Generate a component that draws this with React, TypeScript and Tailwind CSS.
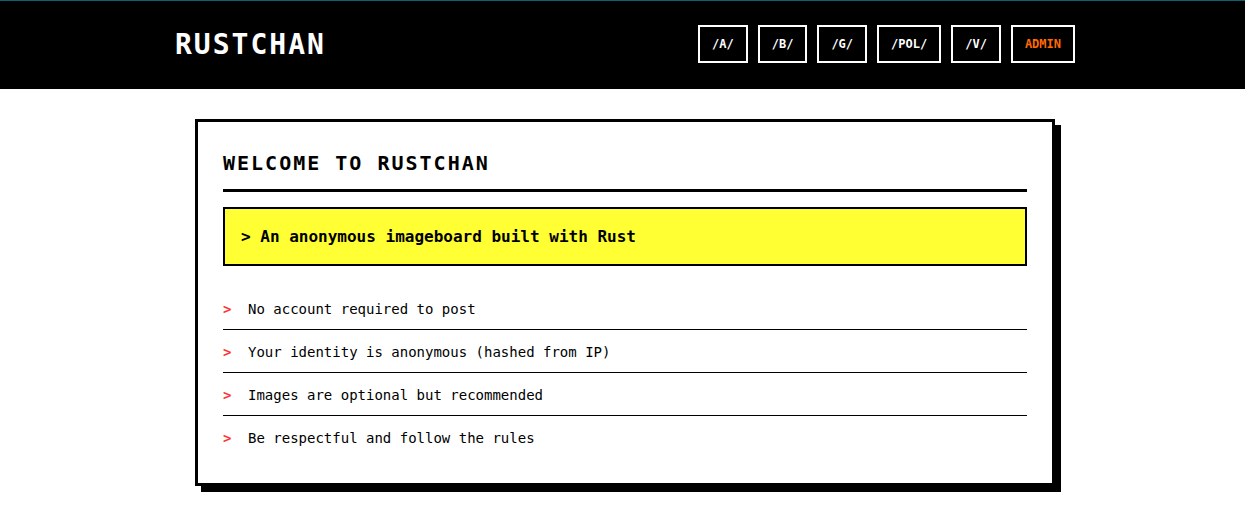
const boards = ['/A/', '/B/', '/G/', '/POL/', '/V/'];

const rules = [
  'No account required to post',
  'Your identity is anonymous (hashed from IP)',
  'Images are optional but recommended',
  'Be respectful and follow the rules',
];

const mono = "font-['DejaVu_Sans_Mono','Liberation_Mono',monospace]";

export default function App() {
  return (
    <div className={`min-h-screen bg-white text-black ${mono}`}>
      <header className="h-[89px] bg-black border-t border-[#0f5f72]">
        <div className="pl-[5px] h-full">
          <div className="max-w-[900px] mx-auto h-full flex items-center justify-between">
            <h1 className="text-white text-[28px] font-bold tracking-[2px] leading-none">
              RUSTCHAN
            </h1>
            <nav className="flex items-center gap-[10px] pb-[2px]">
              {boards.map((b) => (
                <a
                  key={b}
                  href="#"
                  className="h-[38px] px-3 flex items-center border-2 border-white text-white text-[12px] font-bold"
                >
                  {b}
                </a>
              ))}
              <a
                href="#"
                className="h-[38px] px-3 flex items-center border-2 border-white text-[#ff6a00] text-[12px] font-bold"
              >
                ADMIN
              </a>
            </nav>
          </div>
        </div>
      </header>

      <main className="pl-[5px] pt-[30px] pb-10">
        <div className="w-[860px] mx-auto bg-white border-[3px] border-black shadow-[6px_6px_0_#000] p-[25px]">
          <h2 className="text-[20px] font-bold tracking-[2px] leading-8 pb-[10px] border-b-[3px] border-black">
            WELCOME TO RUSTCHAN
          </h2>

          <div className="mt-[15px] bg-[#ffff33] border-2 border-black px-4 py-4 text-[16px] leading-[23px] font-bold">
            &gt; An anonymous imageboard built with Rust
          </div>

          <ul className="mt-[21px]">
            {rules.map((r, i) => (
              <li
                key={r}
                className={`flex pt-[11.5px] pb-[10.5px] text-[14px] leading-5 ${i < rules.length - 1 ? 'border-b border-black' : ''}`}
              >
                <span className="w-[25px] text-[#ff3333] font-bold">&gt;</span>
                <span>{r}</span>
              </li>
            ))}
          </ul>
        </div>
      </main>
    </div>
  );
}
